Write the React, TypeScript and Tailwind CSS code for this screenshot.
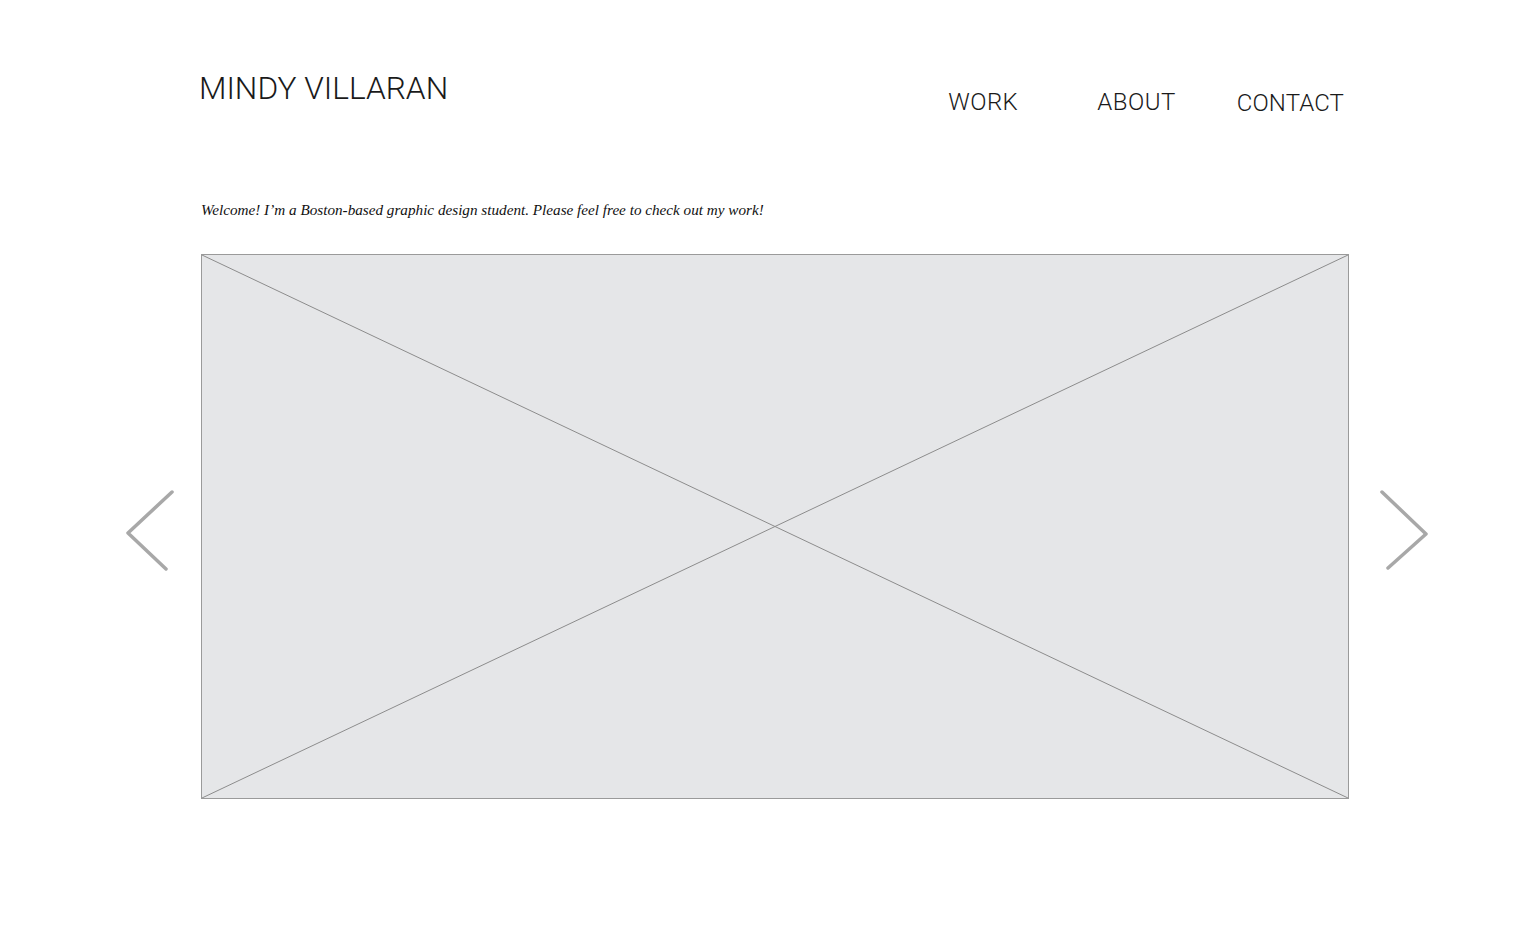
const displayFont = { fontFamily: "Roboto, 'DejaVu Sans', sans-serif" };

function Chevron({ dir }: { dir: "left" | "right" }) {
    const points = dir === "left" ? "47,2 3,43 41,79" : "3,2 47,44 9,78";
    return (
        <svg width="50" height="81" viewBox="0 0 50 81" fill="none">
            <polyline
                points={points}
                stroke="#a8a8a8"
                strokeWidth="3.5"
                strokeLinecap="round"
                strokeLinejoin="round"
            />
        </svg>
    );
}

function NavLink({ label, className }: { label: string; className: string }) {
    return (
        <a
            href="#"
            className={`text-[24px] font-light leading-none tracking-[0.02em] text-[#1a1a1a] ${className}`}
            style={displayFont}
        >
            {label}
        </a>
    );
}

export default function App() {
    return (
        <div className="min-h-[934px] w-full bg-white">
            {/* Header */}
            <header className="flex flex-row items-start pl-[199px] pr-[192px] pt-[73px]">
                <h1
                    className="text-[31.7px] font-light leading-none tracking-normal text-[#1a1a1a]"
                    style={displayFont}
                >
                    MINDY VILLARAN
                </h1>
                <nav className="ml-auto mt-[17px] flex flex-row items-start">
                    <NavLink label="WORK" className="" />
                    <NavLink label="ABOUT" className="ml-[79px]" />
                    <NavLink label="CONTACT" className="ml-[61px] mt-[1px] tracking-[0.005em]" />
                </nav>
            </header>

            {/* Intro */}
            <p
                className="mt-[87px] pl-[201px] text-[15.2px] italic leading-none text-[#111]"
                style={{ fontFamily: "'Liberation Serif', 'DejaVu Serif', serif" }}
            >
                Welcome! I’m a Boston-based graphic design student. Please feel free to check out my work!
            </p>

            {/* Slideshow */}
            <div className="mt-[37px] flex flex-row items-center">
                <div className="flex w-[201px] justify-end pr-[26px] pt-[7px]">
                    <Chevron dir="left" />
                </div>
                <div className="relative h-[545px] w-[1148px] border border-[#9a9a9a] bg-[#e5e6e8]">
                    <svg
                        className="absolute inset-0 h-full w-full"
                        viewBox="0 0 100 100"
                        preserveAspectRatio="none"
                    >
                        <line x1="0" y1="0" x2="100" y2="100" stroke="#8c8c8c" strokeWidth="1" vectorEffect="non-scaling-stroke" />
                        <line x1="100" y1="0" x2="0" y2="100" stroke="#8c8c8c" strokeWidth="1" vectorEffect="non-scaling-stroke" />
                    </svg>
                </div>
                <div className="flex pl-[30px] pt-[7px]">
                    <Chevron dir="right" />
                </div>
            </div>
        </div>
    );
}
